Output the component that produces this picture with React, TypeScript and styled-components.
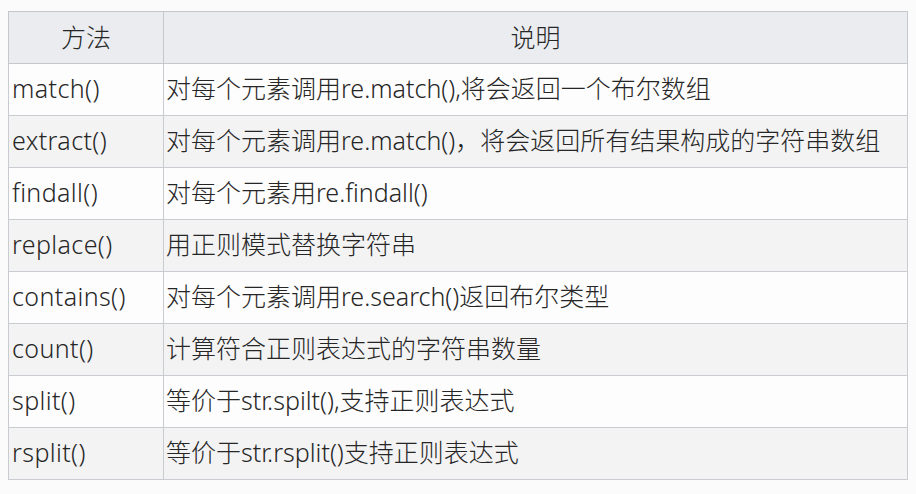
import { createGlobalStyle } from 'styled-components';
import styled from 'styled-components';

const GlobalStyle = createGlobalStyle`
  html, body {
    margin: 0;
    padding: 0;
    background: #fbfbfc;
  }
  body {
    font-family: 'Noto Sans', 'Noto Sans CJK SC', sans-serif;
    color: #262626;
  }
`;

const Page = styled.div`
  padding: 11px 8px 0 8px;
  width: 916px;
  height: 494px;
  box-sizing: border-box;
`;

const Table = styled.table`
  width: 900px;
  border-collapse: collapse;
  border: 1px solid #b8bcc2;
  font-size: 25px;
  font-weight: 300;
  line-height: 1;
`;

const HeadCell = styled.th`
  height: 51px;
  padding: 0;
  background: #eaecf0;
  border: 1px solid #c4c8cd;
  font-weight: 300;
  text-align: center;
`;

const Row = styled.tr<{ $shaded: boolean }>`
  background: ${({ $shaded }) => ($shaded ? '#f3f3f4' : '#fdfdfd')};
`;

const Cell = styled.td<{ $method?: boolean }>`
  height: 49px;
  padding: 0 0 2px ${({ $method }) => ($method ? '3px' : '2px')};
  border: 1px solid #c8ccd1;
  vertical-align: middle;
  white-space: nowrap;
  letter-spacing: ${({ $method }) => ($method ? '0.4px' : '0')};
  width: ${({ $method }) => ($method ? '151px' : 'auto')};
`;

const rows: ReadonlyArray<readonly [string, string]> = [
  ['match()', '对每个元素调用re.match(),将会返回一个布尔数组'],
  ['extract()', '对每个元素调用re.match()，将会返回所有结果构成的字符串数组'],
  ['findall()', '对每个元素用re.findall()'],
  ['replace()', '用正则模式替换字符串'],
  ['contains()', '对每个元素调用re.search()返回布尔类型'],
  ['count()', '计算符合正则表达式的字符串数量'],
  ['split()', '等价于str.spilt(),支持正则表达式'],
  ['rsplit()', '等价于str.rsplit()支持正则表达式'],
];

export default function App() {
  return (
    <>
      <GlobalStyle />
      <Page>
        <Table>
          <thead>
            <tr>
              <HeadCell>方法</HeadCell>
              <HeadCell>说明</HeadCell>
            </tr>
          </thead>
          <tbody>
            {rows.map(([method, desc], i) => (
              <Row key={method} $shaded={i % 2 === 1}>
                <Cell $method>{method}</Cell>
                <Cell>{desc}</Cell>
              </Row>
            ))}
          </tbody>
        </Table>
      </Page>
    </>
  );
}
